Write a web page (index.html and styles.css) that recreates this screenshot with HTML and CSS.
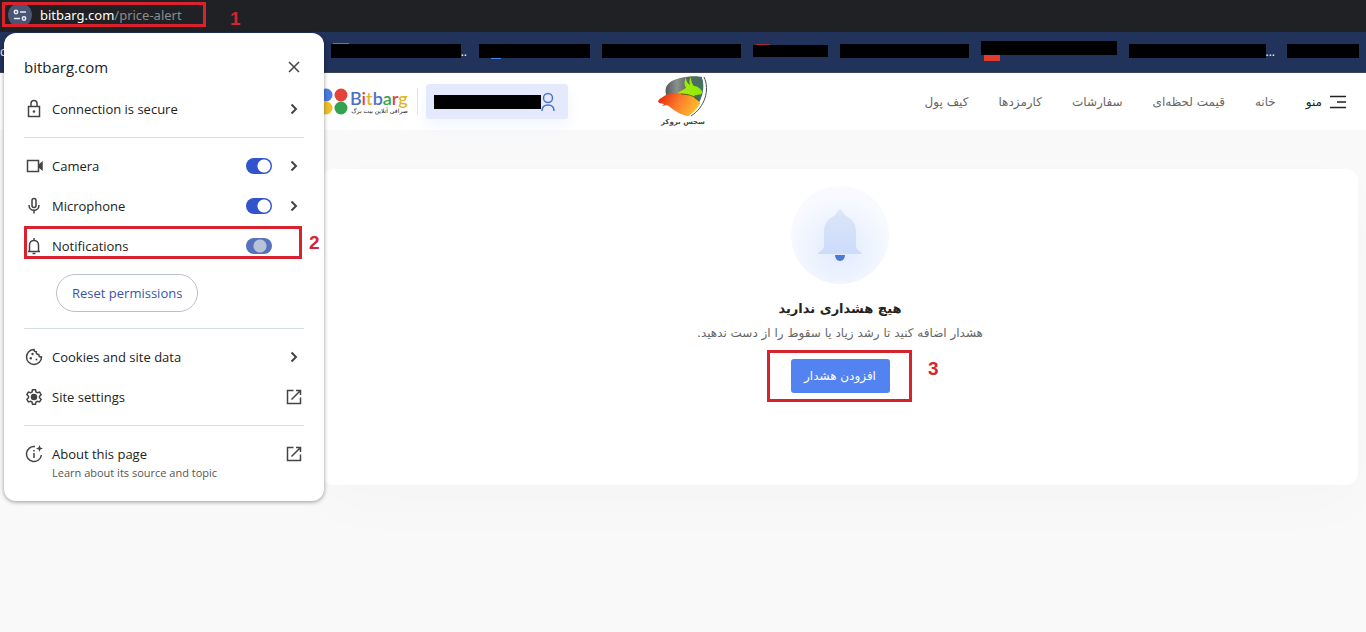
FILE: index.html
```html
<!DOCTYPE html>
<html lang="fa">
<head>
    <meta charset="UTF-8">
    <meta name="viewport" content="width=device-width, initial-scale=1">
    <title>Bitbarg - Price Alert</title>
    <link rel="stylesheet" href="styles.css">
</head>
<body>
    <div class="address-bar">
        <button class="site-info" aria-label="View site information">
            <svg width="14" height="14" viewBox="0 0 14 14" fill="none" stroke="#e8eaf2" stroke-width="1.5">
                <circle cx="3" cy="4" r="1.7"/>
                <path d="M7 4h6M1 10.500h6"/>
                <circle cx="11" cy="10.500" r="1.700"/>
            </svg>
        </button>
        <span class="address">bitbarg.com<span class="path">/price-alert</span></span>
    </div>

    <div class="bookmarks">
        <span class="bookmark w0">c</span>
        <span class="bookmark w1 green"><i></i>..</span>
        <span class="bookmark w2 blue-icon"><i></i></span>
        <span class="bookmark w3"><i></i></span>
        <span class="bookmark w4 red-icon"><i></i></span>
        <span class="bookmark w5"><i></i></span>
        <span class="bookmark w6 red"><i></i></span>
        <span class="bookmark w7"><i></i>...</span>
        <span class="bookmark w8"><i></i></span>
    </div>

    <header class="header" dir="rtl">
        <nav class="nav">
            <button class="menu-btn">
                <svg width="16" height="14" viewBox="0 0 16 14" stroke="#222" stroke-width="1.600">
                    <path d="M0 1.500h16M7 7h9M0 12.500h16"/>
                </svg>
                منو
            </button>
            <a href="#">خانه</a>
            <a href="#">قیمت لحظه‌ای</a>
            <a href="#">سفارشات</a>
            <a href="#">کارمزدها</a>
            <a href="#">کیف پول</a>
        </nav>

        <div class="partner">
            <svg width="50" height="41" viewBox="0 0 50 41">
                <defs>
                    <linearGradient id="shield" x1="0" y1="0" x2="1" y2="0">
                        <stop offset="0" stop-color="#555b59"/>
                        <stop offset=".3" stop-color="#8b908e"/>
                        <stop offset=".6" stop-color="#59675f"/>
                        <stop offset="1" stop-color="#3f7362"/>
                    </linearGradient>
                    <linearGradient id="bear" x1="0" y1=".3" x2="1" y2=".6">
                        <stop offset="0" stop-color="#e82a0c"/>
                        <stop offset=".45" stop-color="#fb7a2c"/>
                        <stop offset="1" stop-color="#ffc52e"/>
                    </linearGradient>
                    <linearGradient id="bull" x1="1" y1="0" x2="0" y2="1">
                        <stop offset="0" stop-color="#7fe800"/>
                        <stop offset=".5" stop-color="#a8ec08"/>
                        <stop offset="1" stop-color="#ffc52e"/>
                    </linearGradient>
                </defs>
                <path d="M8 19C6 9 11 5 22 2 31 0 39 0 44 1c3 10 1 20-6 31-3 4-6 7-9 8L9 25z" fill="url(#shield)"/>
                <path d="M12 21c6-3 11-6 16-9-2-3-2-7 0-11 0 4 1 6 4 8-1-3-1-5 1-8 0 4 1 7 3 9 3 0 6 2 8 5 1 3-2 4-7 4-2 3 1 6 5 9-2 6-6 10-10 11z" fill="url(#bull)"/>
                <path d="M0 25c2-3 5-4 8-6 6-2 11-3 18-1 8 2 13 5 17 10-3 6-8 12-13 12C22 39 16 34 9 29L4 30l2-2-5-1z" fill="url(#bear)"/>
                <path d="M23 18c7 0 13 2 18 6" fill="none" stroke="#635719" stroke-width="1"/>
                <path d="M45 1c5 12 1 30-13 39" fill="none" stroke="#fff" stroke-width="2"/>
                <path d="M46 1c6 13 1 30-13 39" fill="none" stroke="#455" stroke-width="1"/>
            </svg>
            <span>سجس بروکر</span>
        </div>

        <div class="account">
            <button class="user-btn" aria-label="حساب کاربری">
                <svg width="14" height="20" viewBox="0 0 14 20" fill="none" stroke="#4b73cf" stroke-width="1.500">
                    <circle cx="7" cy="6" r="4.500"/>
                    <path d="M1 19c0-4 2-6 6-6s6 2 6 6"/>
                </svg>
                <span class="redacted"></span>
            </button>
            <a class="brand" href="#" dir="ltr" aria-label="Bitbarg">
                <svg width="29" height="27" viewBox="0 0 29 27">
                    <circle cx="7" cy="7" r="6.500" fill="#4a7be0"/>
                    <circle cx="22" cy="7" r="6.500" fill="#e2433b"/>
                    <circle cx="7" cy="20" r="6.500" fill="#ecc02c"/>
                    <circle cx="22" cy="20" r="6.500" fill="#34a350"/>
                </svg>
                <span class="brand-text">
                    <b><span class="blue">B</span><span class="red-text">i</span><span class="yellow">t</span><span class="blue">b</span><span class="green-text">a</span><span class="red-text">r</span><span class="yellow">g</span></b>
                    <small dir="rtl">صرافی آنلاین بیت برگ</small>
                </span>
            </a>
        </div>
    </header>

    <main class="main" dir="rtl">
        <section class="card">
            <svg width="100" height="100" viewBox="0 0 100 100">
                <defs>
                    <radialGradient id="halo" cx=".5" cy=".65" r=".55">
                        <stop offset="0" stop-color="#e1ebfe"/>
                        <stop offset="1" stop-color="#f8faff"/>
                    </radialGradient>
                    <linearGradient id="bell" x1="0" y1="0" x2="0" y2="1">
                        <stop offset="0" stop-color="#dce5f8"/>
                        <stop offset="1" stop-color="#ccdcfb"/>
                    </linearGradient>
                </defs>
                <circle cx="50" cy="50" r="49" fill="url(#halo)"/>
                <path d="M50 25c3 0 3 4 6 6 7 3 10 9 10 16v14c0 4 5 5 6 8H28c1-3 6-4 6-8V47c0-7 3-13 10-16 3-2 3-6 6-6z" fill="url(#bell)"/>
                <path d="M45 70h10c0 3-2 6-5 6s-5-3-5-6z" fill="#4b7bd3"/>
            </svg>
            <h1>هیچ هشداری ندارید</h1>
            <p>هشدار اضافه کنید تا رشد زیاد یا سقوط را از دست ندهید.</p>
            <button class="add-btn">افزودن هشدار</button>
        </section>
    </main>

    <!-- site information popup -->
    <div class="popup" lang="en">
        <div class="popup-header">
            <h2>bitbarg.com</h2>
            <button class="icon-btn" aria-label="Close">
                <svg width="20" height="20" viewBox="0 0 20 20"><path d="M5 5l10 10M15 5L5 15"/></svg>
            </button>
        </div>
        <button class="row">
            <svg width="20" height="20" viewBox="0 0 20 20"><rect x="4.500" y="7.500" width="11" height="10"/><path d="M7 7.500V4.500a3 3 0 0 1 6 0v3"/><circle cx="10" cy="12.500" r=".6"/></svg>
            <span class="row-label">Connection is secure</span>
            <svg width="20" height="20" viewBox="0 0 20 20"><path class="bold" d="M7.500 5.500l4.500 4.500-4.500 4.500"/></svg>
        </button>
        <hr>
        <div class="row">
            <svg width="20" height="20" viewBox="0 0 20 20"><rect x="3.500" y="4.500" width="11" height="11"/><path d="M15 9l3-2.500v7L15 11z" fill="#444"/></svg>
            <label class="row-label" for="camera">Camera</label>
            <input type="checkbox" class="toggle" id="camera" checked>
            <button class="icon-btn" aria-label="Camera details">
                <svg width="20" height="20" viewBox="0 0 20 20"><path class="bold" d="M7.500 5.500l4.500 4.500-4.500 4.500"/></svg>
            </button>
        </div>
        <div class="row">
            <svg width="20" height="20" viewBox="0 0 20 20"><rect x="8" y="2.500" width="4" height="9" rx="2"/><path d="M5 9c0 7 10 7 10 0M10 14.500v3"/></svg>
            <label class="row-label" for="microphone">Microphone</label>
            <input type="checkbox" class="toggle" id="microphone" checked>
            <button class="icon-btn" aria-label="Microphone details">
                <svg width="20" height="20" viewBox="0 0 20 20"><path class="bold" d="M7.500 5.500l4.500 4.500-4.500 4.500"/></svg>
            </button>
        </div>
        <div class="row">
            <svg width="20" height="20" viewBox="0 0 20 20"><path d="M4 15.500h12M5.500 15.500V9c0-6 9-6 9 0v6.500M10 2v2.500"/><path d="M8.500 17.500h3" /></svg>
            <label class="row-label" for="notifications">Notifications</label>
            <input type="checkbox" class="toggle pending" id="notifications">
            <span class="icon-space"></span>
        </div>
        <button class="reset-btn">Reset permissions</button>
        <hr>
        <button class="row">
            <svg width="20" height="20" viewBox="0 0 20 20"><path d="M10 2.500a7.500 7.500 0 1 0 7.500 7.500c-1.800 0-2.800-1-2.800-2.600-1.800 0-2.800-1-2.500-2.600C10.800 4.800 10 4 10 2.500z"/><g class="dots"><circle cx="8.500" cy="7" r="1.200"/><circle cx="6.800" cy="11.200" r="1.200"/><circle cx="12.500" cy="12.500" r=".9"/></g></svg>
            <span class="row-label">Cookies and site data</span>
            <svg width="20" height="20" viewBox="0 0 20 20"><path class="bold" d="M7.500 5.500l4.500 4.500-4.500 4.500"/></svg>
        </button>
        <a class="row" href="#">
            <svg width="20" height="20" viewBox="0 0 20 20"><path d="M8.500 2.800h3l.5 2.200 1.400.8 2.200-.7 1.500 2.600-1.600 1.500v1.600l1.600 1.500-1.500 2.600-2.200-.7-1.400.8-.5 2.200h-3L8 15l-1.400-.8-2.200.7-1.500-2.600 1.600-1.500V9.200L2.900 7.700l1.500-2.600 2.200.7L8 5z"/><circle cx="10" cy="10" r="2.500" fill="#444"/></svg>
            <span class="row-label">Site settings</span>
            <svg width="20" height="20" viewBox="0 0 20 20"><path d="M9.500 3.500h-6v13h13v-6M12 3.500h4.500V8M16.500 3.500l-9 9"/></svg>
        </a>
        <hr>
        <a class="row about" href="#">
            <svg width="20" height="20" viewBox="0 0 20 20"><path d="M11 2.600a7.500 7.500 0 1 0 6.400 8.400M10 9v5M10 6v1.500"/><path d="M15.500 1l.9 2.600 2.600.9-2.600.9-.9 2.600-.9-2.600-2.600-.9 2.600-.9z" class="star"/></svg>
            <span class="row-label">About this page<small>Learn about its source and topic</small></span>
            <svg width="20" height="20" viewBox="0 0 20 20"><path d="M9.500 3.500h-6v13h13v-6M12 3.500h4.500V8M16.500 3.500l-9 9"/></svg>
        </a>
    </div>

    <!-- step markers -->
    <div class="mark mark-1"><span>1</span></div>
    <div class="mark mark-2"><span>2</span></div>
    <div class="mark mark-3"><span>3</span></div>
</body>
</html>
```

FILE: styles.css
```css
* {
    box-sizing: border-box;
}

body {
    margin: 0;
    min-height: 100vh;
    position: relative;
    background: #f9f9f9;
    font-family: "DejaVu Sans", sans-serif;
    font-size: 12px;
    color: #222;
}

button {
    font: inherit;
    color: inherit;
    background: none;
    border: none;
    padding: 0;
    cursor: pointer;
}

a {
    color: inherit;
    text-decoration: none;
}

/* browser bars */
.address-bar {
    display: flex;
    align-items: center;
    gap: 8px;
    height: 32px;
    padding: 0 8px 2px;
    background: #202124;
    font-family: "Noto Sans", sans-serif;
    font-size: 13px;
}

.site-info {
    display: flex;
    align-items: center;
    justify-content: center;
    width: 24px;
    height: 24px;
    border-radius: 50%;
    background: #4b5677;
}

.address {
    color: #fff;
}

.path {
    color: #8b8c90;
}

.bookmarks {
    display: flex;
    align-items: center;
    gap: 12px;
    height: 41px;
    padding-bottom: 2px;
    background: #21325b;
    border-bottom: 1px solid #3d4659;
    color: #fff;
    font-family: "Open Sans", sans-serif;
    overflow: hidden;
}

.bookmark {
    display: flex;
    flex: none;
    align-items: center;
    height: 16px;
}

.bookmark i {
    flex: 1;
    height: 14px;
    background: #000;
}

.w0 { width: 319px; }
.w1 { width: 136px; }
.w2 { width: 111px; }
.w3 { width: 139px; }
.w4 { width: 75px; }
.w5 { width: 129px; }
.w6 { width: 136px; }
.w7 { width: 146px; }
.w8 { width: 72px; }

.w4 i {
    height: 12px;
}

.red {
    background: linear-gradient(#e23b30, #e23b30) 3px 100% / 16px 10px no-repeat;
    height: 20px;
    align-items: flex-start;
}

.green {
    background: linear-gradient(#2a9d8a, #2a9d8a) 2px 0 / 16px 8px no-repeat;
}

.blue-icon {
    background: linear-gradient(#4285f4, #4285f4) 12px 100% / 10px 8px no-repeat;
}

.red-icon {
    background: linear-gradient(#a52a35, #a52a35) 3px 1px / 14px 8px no-repeat;
}

/* site header */
.header {
    display: grid;
    grid-template-columns: 1fr auto 1fr;
    align-items: center;
    height: 57px;
    padding: 0 20px;
    background: #fff;
}

.nav {
    display: flex;
    align-items: center;
    gap: 30px;
    color: #666;
    white-space: nowrap;
}

.menu-btn {
    display: flex;
    align-items: center;
    gap: 8px;
    color: #222;
}

.partner {
    display: flex;
    flex-direction: column;
    align-items: center;
    font-size: 7px;
    font-weight: bold;
    line-height: 10px;
    color: #444;
}

.account {
    display: flex;
    align-items: center;
    justify-content: flex-end;
    padding-left: 299px;
    gap: 8px;
}

.user-btn {
    display: flex;
    flex: none;
    align-items: center;
    width: 142px;
    height: 35px;
    padding: 0 13px 0 8px;
    border-radius: 3px;
    background: #e4eafb;
    box-shadow: 0 6px 14px rgba(82, 131, 240, 0.08);
}

.redacted {
    flex: 1;
    height: 14px;
    background: #000;
}

.brand {
    display: flex;
    flex: none;
    align-items: center;
    gap: 2px;
    padding-right: 9px;
    border-right: 1px solid #e4e4e4;
}

.brand-text b {
    display: block;
    font: 600 18px/18px Lato, sans-serif;
}

.brand-text small {
    display: block;
    font-size: 6px;
    line-height: 8px;
    white-space: nowrap;
}

.blue { color: #4a70c8; }
.red-text { color: #e2433b; }
.yellow { color: #e0b52c; }
.green-text { color: #34a350; }

/* price alert */
.main {
    padding: 39px 8px 0 322px;
}

.card {
    display: flex;
    flex-direction: column;
    align-items: center;
    min-height: 316px;
    padding-top: 16px;
    border-radius: 12px;
    background: #fff;
    box-shadow: 0 20px 60px rgba(0, 0, 0, 0.02);
}

.card h1 {
    margin: 13px 0 0;
    font-size: 13px;
    line-height: 22px;
}

.card p {
    margin: 2px 0 15px;
    line-height: 22px;
    color: #666;
}

.add-btn {
    width: 99px;
    height: 34px;
    border-radius: 3px;
    background: #5283f0;
    color: #fff;
}

/* site information popup */
.popup {
    position: absolute;
    top: 33px;
    left: 4px;
    width: 320px;
    padding: 14px 20px 27px;
    border-radius: 12px;
    background: #fff;
    box-shadow: 0 1px 4px rgba(0, 0, 0, 0.4);
    font-family: "Open Sans", sans-serif;
    font-size: 13px;
}

.popup svg {
    flex: none;
    display: block;
    fill: none;
    stroke: #444;
    stroke-width: 1.5;
}

.popup .bold {
    stroke-width: 2;
}

.popup .dots,
.popup .star {
    fill: #444;
    stroke: none;
}

.popup-header {
    display: flex;
    align-items: center;
    justify-content: space-between;
    height: 40px;
    margin-bottom: 2px;
}

.popup-header h2 {
    margin: 0;
    font-size: 15px;
    font-weight: 500;
}

.row {
    display: flex;
    align-items: center;
    gap: 8px;
    width: 100%;
    height: 40px;
    text-align: left;
}

.row-label {
    flex: 1;
    position: relative;
}

.row-label small {
    position: absolute;
    top: 100%;
    left: 0;
    font-size: 11px;
    line-height: 20px;
    color: #555;
    white-space: nowrap;
}

.popup hr {
    margin: 8px 0;
    border: none;
    border-top: 1px solid #d5dde0;
}

.row,
.reset-btn {
    font-weight: 500;
}

.row-label small {
    font-weight: 400;
}

.toggle {
    appearance: none;
    width: 26px;
    height: 16px;
    margin: 0 4px 0 0;
    border-radius: 8px;
    background: radial-gradient(circle at 18px 8px, #fff 6px, #3154cc 7px);
    cursor: pointer;
}

.toggle.pending {
    background: radial-gradient(circle at 14px 8px, #b9c3d8 6px, #5672bd 7px);
}

.icon-space {
    width: 20px;
}

.reset-btn {
    display: block;
    height: 38px;
    margin: 8px 0 16px 32px;
    padding: 0 15px;
    border: 1px solid #b9bfd0;
    border-radius: 19px;
    color: #3a54a8;
}

/* step markers */
.mark {
    position: absolute;
    border: 3px solid #d8232e;
    color: #d8232e;
    font: bold 19px/20px "Liberation Sans", Arial, sans-serif;
    pointer-events: none;
}

.mark span {
    position: absolute;
    left: 100%;
    top: 4px;
}

.mark-1 {
    top: 2px;
    left: 2px;
    width: 204px;
    height: 25px;
}

.mark-1 span {
    margin-left: 27px;
}

.mark-2 {
    top: 226px;
    left: 24px;
    width: 278px;
    height: 33px;
}

.mark-2 span {
    margin-left: 10px;
}

.mark-3 {
    top: 350px;
    left: 767px;
    width: 145px;
    height: 52px;
}

.mark-3 span {
    top: 6px;
    margin-left: 19px;
}
```
